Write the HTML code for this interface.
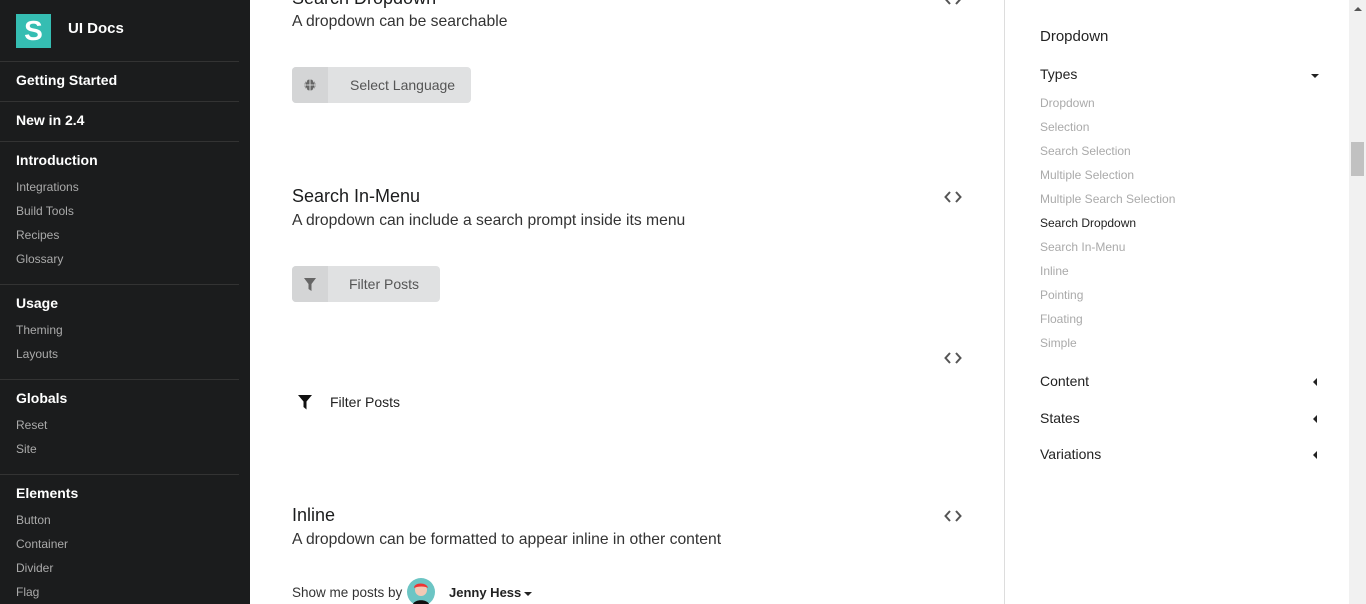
<!DOCTYPE html>
<html><head><meta charset="utf-8"><style>
*{margin:0;padding:0;box-sizing:border-box}
body{width:1366px;height:604px;overflow:hidden;background:#fff;font-family:"Liberation Sans",sans-serif;position:relative;color:#333}
.side{position:absolute;left:0;top:0;width:250px;height:604px;background:#1b1c1d;color:#fff}
.abs{position:absolute}
.logo{left:16px;top:14px;width:35px;height:34px;background:#35bdb2;color:#fff;font-weight:bold;font-size:28px;text-align:center;line-height:34px}
.hr{position:absolute;left:0;width:239px;height:1px;background:#333}
.h{position:absolute;left:16px;font-size:14px;font-weight:bold;color:#fff}
.s{position:absolute;left:16px;font-size:12px;color:#aaa}
.mt{position:absolute;left:292px;font-size:18px;color:#1b1c1d}
.md{position:absolute;left:292px;font-size:15.7px;color:#333}
.btn{position:absolute;left:292px;height:36px;background:#e0e1e2;border-radius:4px;color:#555;font-size:14px;overflow:hidden}
.btn .ic{position:absolute;left:0;top:0;width:36px;height:36px;background:#d4d5d6}
.code{position:absolute;left:944px}
.r{position:absolute;left:1040px;font-size:12px;color:#aaa}
.rh{position:absolute;left:1040px;font-size:14px;color:#222}
.tri{position:absolute;width:0;height:0}
</style></head><body>
<div class="side">
<div class="abs logo">S</div>
<div class="abs" style="left:68px;top:20px;font-size:15px;font-weight:bold">UI Docs</div>
<div class="hr" style="top:61px"></div>
<div class="h" style="top:72px">Getting Started</div>
<div class="hr" style="top:101px"></div>
<div class="h" style="top:112px">New in 2.4</div>
<div class="hr" style="top:141px"></div>
<div class="h" style="top:152px">Introduction</div>
<div class="s" style="top:180px">Integrations</div>
<div class="s" style="top:204px">Build Tools</div>
<div class="s" style="top:228px">Recipes</div>
<div class="s" style="top:252px">Glossary</div>
<div class="hr" style="top:284px"></div>
<div class="h" style="top:295px">Usage</div>
<div class="s" style="top:323px">Theming</div>
<div class="s" style="top:347px">Layouts</div>
<div class="hr" style="top:379px"></div>
<div class="h" style="top:390px">Globals</div>
<div class="s" style="top:418px">Reset</div>
<div class="s" style="top:442px">Site</div>
<div class="hr" style="top:474px"></div>
<div class="h" style="top:485px">Elements</div>
<div class="s" style="top:513px">Button</div>
<div class="s" style="top:537px">Container</div>
<div class="s" style="top:561px">Divider</div>
<div class="s" style="top:585px">Flag</div>
</div>

<div class="mt" style="top:-12px">Search Dropdown</div>
<svg class="code" style="top:-8px" width="18" height="14"><path d="M6 2L1.5 7L6 12M12 2L16.5 7L12 12" stroke="#555" stroke-width="2" fill="none"/></svg>
<div class="md" style="top:13px">A dropdown can be searchable</div>
<div class="btn" style="top:67px;width:179px"><div class="ic"><svg width="36" height="36"><circle cx="18" cy="18" r="5.5" fill="#666"/><path d="M12.5 18h11M18 12.5v11M15 13c-1.5 3-1.5 7 0 10M21 13c1.5 3 1.5 7 0 10" stroke="#d4d5d6" stroke-width="1"/></svg></div><span class="abs" style="left:58px;top:10px">Select Language</span></div>

<div class="mt" style="top:186px">Search In-Menu</div>
<svg class="code" style="top:190px" width="18" height="14"><path d="M6 2L1.5 7L6 12M12 2L16.5 7L12 12" stroke="#555" stroke-width="2" fill="none"/></svg>
<div class="md" style="top:212px">A dropdown can include a search prompt inside its menu</div>
<div class="btn" style="top:266px;width:148px"><div class="ic"><svg width="36" height="36"><path d="M12 12h12l-4.5 6v7l-3-2v-5z" fill="#666"/></svg></div><span class="abs" style="left:57px;top:10px">Filter Posts</span></div>

<svg class="code" style="top:351px" width="18" height="14"><path d="M6 2L1.5 7L6 12M12 2L16.5 7L12 12" stroke="#555" stroke-width="2" fill="none"/></svg>
<svg class="abs" style="left:297px;top:393px" width="18" height="18"><path d="M1 2h14l-5.5 6.5v8l-3-2.5v-5.5z" fill="#111"/></svg>
<div class="abs" style="left:330px;top:394px;font-size:14px;color:#222">Filter Posts</div>

<div class="mt" style="top:505px">Inline</div>
<svg class="code" style="top:509px" width="18" height="14"><path d="M6 2L1.5 7L6 12M12 2L16.5 7L12 12" stroke="#555" stroke-width="2" fill="none"/></svg>
<div class="md" style="top:531px">A dropdown can be formatted to appear inline in other content</div>
<div class="abs" style="left:292px;top:585px;font-size:13.5px">Show me posts by</div>
<svg class="abs" style="left:407px;top:578px" width="28" height="26"><circle cx="14" cy="14" r="14" fill="#6cc5c4"/><path d="M6 26c2-5 14-5 16 0z" fill="#111"/><circle cx="14" cy="12" r="6" fill="#f3c9b5"/><path d="M7 10c0-6 13-6 14 0c-3-2-10-2-14 0z" fill="#e33"/></svg>
<div class="abs" style="left:449px;top:585px;font-size:13px;font-weight:bold;color:#222">Jenny Hess</div>
<div class="tri" style="left:524px;top:592px;border-left:4px solid transparent;border-right:4px solid transparent;border-top:4px solid #222"></div>

<div class="abs" style="left:1004px;top:0;width:1px;height:604px;background:#ddd"></div>
<div class="rh" style="top:28px;font-size:15px">Dropdown</div>
<div class="rh" style="top:66px">Types</div>
<div class="tri" style="left:1311px;top:74px;border-left:4px solid transparent;border-right:4px solid transparent;border-top:4px solid #222"></div>
<div class="r" style="top:96px">Dropdown</div>
<div class="r" style="top:120px">Selection</div>
<div class="r" style="top:144px">Search Selection</div>
<div class="r" style="top:168px">Multiple Selection</div>
<div class="r" style="top:192px">Multiple Search Selection</div>
<div class="r" style="top:216px;color:#222">Search Dropdown</div>
<div class="r" style="top:240px">Search In-Menu</div>
<div class="r" style="top:264px">Inline</div>
<div class="r" style="top:288px">Pointing</div>
<div class="r" style="top:312px">Floating</div>
<div class="r" style="top:336px">Simple</div>
<div class="rh" style="top:373px">Content</div>
<div class="tri" style="left:1313px;top:378px;border-top:4px solid transparent;border-bottom:4px solid transparent;border-right:4px solid #222"></div>
<div class="rh" style="top:410px">States</div>
<div class="tri" style="left:1313px;top:415px;border-top:4px solid transparent;border-bottom:4px solid transparent;border-right:4px solid #222"></div>
<div class="rh" style="top:446px">Variations</div>
<div class="tri" style="left:1313px;top:451px;border-top:4px solid transparent;border-bottom:4px solid transparent;border-right:4px solid #222"></div>

<div class="abs" style="left:1349px;top:0;width:17px;height:604px;background:#f1f1f1"></div>
<div class="tri" style="left:1354px;top:7px;border-left:4px solid transparent;border-right:4px solid transparent;border-bottom:4px solid #555"></div>
<div class="abs" style="left:1351px;top:142px;width:13px;height:34px;background:#c1c1c1"></div>
</body></html>
